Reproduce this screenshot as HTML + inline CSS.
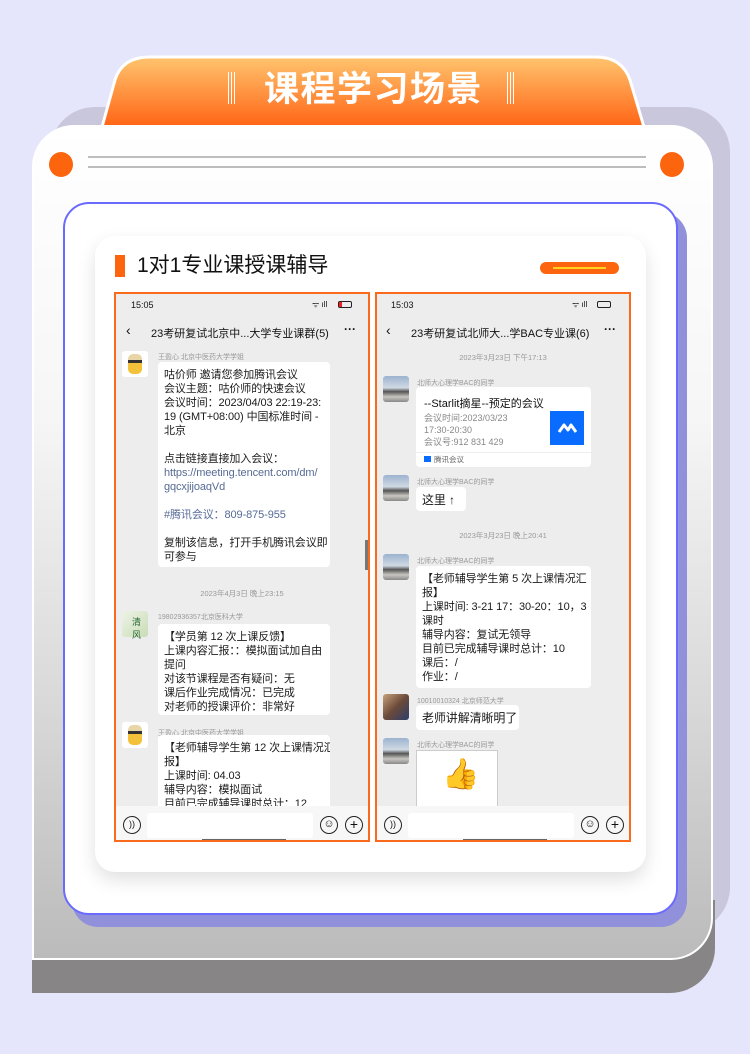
<!DOCTYPE html>
<html><head><meta charset="utf-8"><style>
*{margin:0;padding:0;box-sizing:border-box}
body{width:750px;height:1054px;background:#e5e5fb;position:relative;overflow:hidden;font-family:"Liberation Sans","Noto Sans CJK SC",sans-serif;color:#111}
.a{position:absolute}
.t{position:absolute;white-space:nowrap}
.ph{position:absolute;top:292px;width:256px;height:550px;border:2px solid #fa6a1c;background:#ededed;overflow:hidden}
.bub{position:absolute;background:#fff;border-radius:4px;font-size:11px;line-height:14px;padding:6px 6px;color:#1a1a1a;white-space:nowrap;overflow:hidden;letter-spacing:-0.1px}
.nm{position:absolute;font-size:7px;color:#999;white-space:nowrap}
.ts{position:absolute;font-size:7.5px;color:#999;white-space:nowrap;width:100%;text-align:center}
.av{position:absolute;width:26px;height:26px;border-radius:3px}
.sky{background:linear-gradient(#9cb3cf 0%,#cfd9e3 45%,#555 60%,#c9c7c0 80%,#888 100%)}
.ic{position:absolute;width:18px;height:18px;border:1.5px solid #222;border-radius:50%;font-size:14px;line-height:14px;text-align:center}
</style></head><body>
<div class="a" style="left:50px;top:107px;width:680px;height:825px;background:#c8c7dc;border-radius:45px"></div>
<div class="a" style="left:32px;top:900px;width:683px;height:93px;background:#878586;border-radius:0 0 45px 0"></div>
<div class="a" style="left:100px;top:55px;width:546px;height:80px;">
<svg width="546" height="80" viewBox="0 0 546 80"><defs><linearGradient id="g" x1="0" y1="0" x2="0" y2="1"><stop offset="0" stop-color="#ffc46e"/><stop offset="1" stop-color="#ff6415"/></linearGradient></defs>
<path d="M2 72 L15 25 Q22 2 50 2 L496 2 Q522 2 530 25 L544 72 Z" fill="url(#g)" stroke="#fff" stroke-width="3"/></svg></div>
<div class="t" style="left:228px;top:72px;width:7px;height:32px;border-left:1.5px solid #fff;border-right:1.5px solid #fff"></div>
<div class="t" style="left:231px;top:72px;width:0;height:32px;border-left:1.5px solid #fff"></div>
<div class="t" style="left:507px;top:72px;width:7px;height:32px;border-left:1.5px solid #fff;border-right:1.5px solid #fff"></div>
<div class="t" style="left:510px;top:72px;width:0;height:32px;border-left:1.5px solid #fff"></div>
<div class="t" style="left:264px;top:69px;font-size:35px;font-weight:bold;color:#fff;letter-spacing:1.5px;line-height:42px">课程学习场景</div>
<div class="a" style="left:32px;top:125px;width:681px;height:835px;background:linear-gradient(#fff 0%,#f6f6f6 35%,#d8d8d8 70%,#bbb 100%);border:2px solid #fff;border-radius:42px 42px 42px 0"></div>
<div class="a" style="left:49px;top:152px;width:24px;height:25px;border-radius:50%;background:#fc640e"></div>
<div class="a" style="left:660px;top:152px;width:24px;height:25px;border-radius:50%;background:#fc640e"></div>
<div class="a" style="left:88px;top:156px;width:558px;height:2px;background:#bdbdbd"></div>
<div class="a" style="left:88px;top:166px;width:558px;height:2px;background:#bdbdbd"></div>
<div class="a" style="left:72px;top:212px;width:615px;height:715px;background:#9191db;border-radius:26px"></div>
<div class="a" style="left:63px;top:202px;width:615px;height:713px;background:#fff;border:2px solid #6a6aff;border-radius:26px"></div>
<div class="a" style="left:95px;top:236px;width:551px;height:636px;background:#fff;border-radius:20px;box-shadow:0 8px 18px rgba(0,0,0,.12)"></div>
<div class="a" style="left:115px;top:255px;width:10px;height:22px;background:#fc640e"></div>
<div class="t" style="left:137px;top:253px;font-size:21px;line-height:26px;color:#111">1对1专业课授课辅导</div>
<div class="a" style="left:540px;top:262px;width:79px;height:12px;background:#fc640e;border-radius:6px"></div>
<div class="a" style="left:553px;top:267px;width:53px;height:2px;background:#ffd21e"></div>

<div class="ph" style="left:114px">
 <div class="t" style="left:15px;top:6px;font-size:9px">15:05</div>
 <div class="t" style="left:196px;top:5px;font-size:8px">ᯤ ıll</div>
 <div class="a" style="left:222px;top:7px;width:14px;height:7px;border:1.2px solid #222;border-radius:2px"><div style="width:3px;height:100%;background:#e22"></div></div>
 <div class="t" style="left:10px;top:28px;font-size:14px">‹</div>
 <div class="t" style="left:35px;top:31px;font-size:11px">23考研复试北京中...大学专业课群(5)</div>
 <div class="t" style="left:228px;top:28px;font-size:12px;font-weight:bold">···</div>
 <div class="av" style="left:6px;top:57px;background:#fff"><div style="margin:3px 6px;width:14px;height:20px;background:linear-gradient(#e8d6a8 30%,#333 30% 45%,#f4c23a 45%);border-radius:5px"></div></div>
 <div class="nm" style="left:42px;top:58px">王盈心 北京中医药大学学姐</div>
 <div class="bub" style="left:42px;top:68px;width:172px;height:205px">咕价师 邀请您参加腾讯会议<br>会议主题：咕价师的快速会议<br>会议时间：2023/04/03 22:19-23:<br>19 (GMT+08:00) 中国标准时间 -<br>北京<br><br>点击链接直接加入会议：<br><span style="color:#576b95">https://meeting.tencent.com/dm/<br>gqcxjijoaqVd</span><br><br><span style="color:#576b95">#腾讯会议：809-875-955</span><br><br>复制该信息，打开手机腾讯会议即<br>可参与</div>
 <div class="a" style="left:249px;top:246px;width:3px;height:30px;background:#777"></div>
 <div class="ts" style="top:294px">2023年4月3日 晚上23:15</div>
 <div class="av" style="left:6px;top:317px;background:linear-gradient(135deg,#eef3e6,#c8dcb5)"><div style="margin:4px 10px;font-size:9px;color:#263">清<br>风</div></div>
 <div class="nm" style="left:42px;top:318px">19802936357北京医科大学</div>
 <div class="bub" style="left:42px;top:330px;width:172px;height:91px">【学员第 12 次上课反馈】<br>上课内容汇报：：模拟面试加自由<br>提问<br>对该节课程是否有疑问：无<br>课后作业完成情况：已完成<br>对老师的授课评价：非常好</div>
 <div class="av" style="left:6px;top:428px;background:#fff"><div style="margin:3px 6px;width:14px;height:20px;background:linear-gradient(#e8d6a8 30%,#333 30% 45%,#f4c23a 45%);border-radius:5px"></div></div>
 <div class="nm" style="left:42px;top:434px">王盈心 北京中医药大学学姐</div>
 <div class="bub" style="left:42px;top:441px;width:172px;height:90px">【老师辅导学生第 12 次上课情况汇<br>报】<br>上课时间: 04.03<br>辅导内容：模拟面试<br>目前已完成辅导课时总计：12</div>
 <div class="a" style="left:0;top:512px;width:252px;height:36px;background:#f7f7f7"></div>
 <div class="ic" style="left:7px;top:522px;font-size:9px">))</div>
 <div class="a" style="left:31px;top:519px;width:166px;height:25px;background:#fff;border-radius:3px"></div>
 <div class="ic" style="left:204px;top:522px;font-size:11px">☺</div>
 <div class="ic" style="left:229px;top:522px">+</div>
 <div class="a" style="left:86px;top:545px;width:84px;height:2px;background:#666"></div>
</div>

<div class="ph" style="left:375px">
 <div class="t" style="left:14px;top:6px;font-size:9px">15:03</div>
 <div class="t" style="left:195px;top:5px;font-size:8px">ᯤ ıll</div>
 <div class="a" style="left:220px;top:7px;width:14px;height:7px;border:1.2px solid #222;border-radius:2px"></div>
 <div class="t" style="left:9px;top:28px;font-size:14px">‹</div>
 <div class="t" style="left:34px;top:31px;font-size:11px">23考研复试北师大...学BAC专业课(6)</div>
 <div class="t" style="left:227px;top:28px;font-size:12px;font-weight:bold">···</div>
 <div class="ts" style="top:58px">2023年3月23日 下午17:13</div>
 <div class="av sky" style="left:6px;top:82px"></div>
 <div class="nm" style="left:40px;top:84px">北师大心理学BAC的同学</div>
 <div class="a" style="left:39px;top:93px;width:175px;height:80px;background:#fff;border-radius:4px">
  <div class="t" style="left:8px;top:8px;font-size:11px">--Starlit摘星--预定的会议</div>
  <div class="t" style="left:8px;top:25px;font-size:9px;line-height:12px;color:#888">会议时间:2023/03/23<br>17:30-20:30<br>会议号:912 831 429</div>
  <div class="a" style="left:134px;top:24px;width:34px;height:34px;background:#0a6cff"><svg width="34" height="34"><path d="M9 21 L14 14 L18 19 L21 14 L26 21" fill="none" stroke="#fff" stroke-width="3" stroke-linejoin="round"/></svg></div>
  <div class="a" style="left:0;top:65px;width:175px;height:1px;background:#eee"></div>
  <div class="a" style="left:8px;top:69px;width:7px;height:6px;background:#0a6cff"></div>
  <div class="t" style="left:18px;top:67px;font-size:7.5px;color:#666">腾讯会议</div>
 </div>
 <div class="av sky" style="left:6px;top:181px"></div>
 <div class="nm" style="left:40px;top:183px">北师大心理学BAC的同学</div>
 <div class="bub" style="left:39px;top:193px;width:50px;height:24px;font-size:12px">这里 ↑</div>
 <div class="ts" style="top:236px">2023年3月23日 晚上20:41</div>
 <div class="av sky" style="left:6px;top:260px"></div>
 <div class="nm" style="left:40px;top:262px">北师大心理学BAC的同学</div>
 <div class="bub" style="left:39px;top:272px;width:175px;height:122px">【老师辅导学生第 5 次上课情况汇<br>报】<br>上课时间: 3-21 17：30-20：10，3<br>课时<br>辅导内容：复试无领导<br>目前已完成辅导课时总计：10<br>课后：/<br>作业：/</div>
 <div class="av" style="left:6px;top:400px;background:linear-gradient(135deg,#c9a27c,#6b4a3a 50%,#2d3e6a)"></div>
 <div class="nm" style="left:40px;top:402px">10010010324 北京师范大学</div>
 <div class="bub" style="left:39px;top:411px;width:103px;height:25px;font-size:12px">老师讲解清晰明了</div>
 <div class="av sky" style="left:6px;top:444px"></div>
 <div class="nm" style="left:40px;top:446px">北师大心理学BAC的同学</div>
 <div class="a" style="left:39px;top:456px;width:82px;height:60px;background:#fff;border:1px solid #ccc">
  <div class="t" style="left:25px;top:6px;font-size:30px;color:#f3c28a">👍</div>
 </div>
 <div class="a" style="left:0;top:512px;width:252px;height:36px;background:#f7f7f7"></div>
 <div class="ic" style="left:7px;top:522px;font-size:9px">))</div>
 <div class="a" style="left:31px;top:519px;width:166px;height:25px;background:#fff;border-radius:3px"></div>
 <div class="ic" style="left:204px;top:522px;font-size:11px">☺</div>
 <div class="ic" style="left:229px;top:522px">+</div>
 <div class="a" style="left:86px;top:545px;width:84px;height:2px;background:#666"></div>
</div>
</body></html>
